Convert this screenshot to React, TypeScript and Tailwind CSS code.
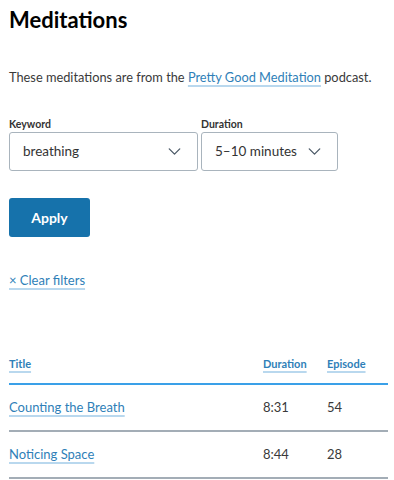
import { ChevronDown } from 'lucide-react'

const ROWS = [
  { title: 'Counting the Breath', duration: '8:31', episode: '54' },
  { title: 'Noticing Space', duration: '8:44', episode: '28' },
]

const link = 'text-[#2f7fb8] underline decoration-[#b9d8ee] decoration-2 underline-offset-[3px]'

function Select({ label, value, width }: { label: string; value: string; width: string }) {
  return (
    <div className={`flex flex-col ${width}`}>
      <span className="text-[10.5px] font-bold text-[#333] leading-none mb-[2px]">{label}</span>
      <div className="flex items-center justify-between h-[39px] border border-[#a9b4bd] rounded-[3px] pl-[13px] pr-[12px] text-[13.5px] text-[#333]">
        <span>{value}</span>
        <ChevronDown size={21} strokeWidth={1.5} className="text-[#4a5866]" />
      </div>
    </div>
  )
}

export default function App() {
  return (
    <div className="bg-white min-h-[480px] pl-[9px] pr-[6px] pt-[6px]" style={{ fontFamily: 'Lato, "Noto Sans", sans-serif' }}>
      <h1 className="text-[22px] font-bold text-black leading-[28px]">Meditations</h1>

      <p className="mt-[34px] text-[12.8px] text-[#3a3a3a] leading-[18px] whitespace-nowrap">
        These meditations are from the <a className={link}>Pretty Good Meditation</a> podcast.
      </p>

      <div className="mt-[33px] flex gap-[3px]">
        <Select label="Keyword" value="breathing" width="w-[189px]" />
        <Select label="Duration" value="5–10 minutes" width="w-[137px]" />
      </div>

      <button className="mt-[27px] w-[81px] h-[39px] rounded-[3px] bg-[#1672ab] text-white text-[14px] font-bold">
        Apply
      </button>

      <div className="mt-[30px]">
        <a className={`${link} text-[13px]`}>× Clear filters</a>
      </div>

      <div className="mt-[65px]">
        <div className="grid grid-cols-[1fr_64px_61px] pb-[11px] border-b-2 border-[#3aa0e8] text-[11px] font-bold">
          <span><a className={link}>Title</a></span>
          <span><a className={link}>Duration</a></span>
          <span><a className={link}>Episode</a></span>
        </div>
        {ROWS.map(r => (
          <div key={r.title} className="grid grid-cols-[1fr_64px_61px] items-center h-[47px] border-b-2 border-[#a3adb6] text-[13px] text-[#3a3a3a]">
            <span><a className={link}>{r.title}</a></span>
            <span>{r.duration}</span>
            <span>{r.episode}</span>
          </div>
        ))}
      </div>
    </div>
  )
}
